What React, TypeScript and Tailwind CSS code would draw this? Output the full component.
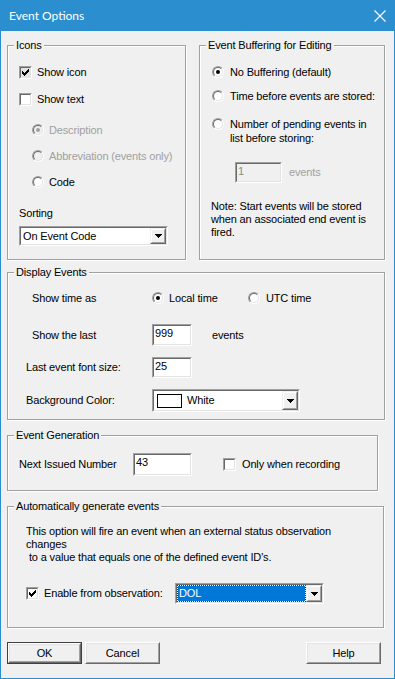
import type { ReactNode } from "react";

const CHECK_PATH =
  "M7 1h1v1h-1z M6 2h2v1h-2z M1 3h1v1h-1z M5 3h3v1h-3z M1 4h2v1h-2z M4 4h3v1h-3z M1 5h5v1h-5z M2 6h3v1h-3z M3 7h1v1h-1z";

function Sunken({
  className,
  inner,
  children,
}: {
  className: string;
  inner?: string;
  children?: ReactNode;
}) {
  return (
    <div
      className={`border border-t-[#a0a0a0] border-l-[#a0a0a0] border-b-white border-r-white ${className}`}
    >
      <div
        className={`h-full w-full border border-t-[#696969] border-l-[#696969] border-b-[#e3e3e3] border-r-[#e3e3e3] ${
          inner ?? "bg-white"
        }`}
      >
        {children}
      </div>
    </div>
  );
}

function Checkbox({ checked, pressed }: { checked?: boolean; pressed?: boolean }) {
  return (
    <Sunken
      className="w-[13px] h-[13px] shrink-0"
      inner={pressed ? "bg-[#e3e3e3]" : "bg-white"}
    >
      {checked && (
        <svg width="9" height="9" viewBox="0 0 9 9" shapeRendering="crispEdges">
          <path d={CHECK_PATH} fill="#000" />
        </svg>
      )}
    </Sunken>
  );
}

function Radio({ checked, disabled }: { checked?: boolean; disabled?: boolean }) {
  return (
    <div className="w-[12px] h-[12px] shrink-0 rounded-full border border-t-[#a0a0a0] border-l-[#a0a0a0] border-b-white border-r-white">
      <div
        className={`flex h-full w-full items-center justify-center rounded-full border border-t-[#696969] border-l-[#696969] border-b-[#e3e3e3] border-r-[#e3e3e3] ${
          disabled ? "bg-[#f0f0f0]" : "bg-white"
        }`}
      >
        {checked && (
          <div
            className={`w-[4px] h-[4px] rounded-full ${
              disabled ? "bg-[#a0a0a0]" : "bg-black"
            }`}
          />
        )}
      </div>
    </div>
  );
}

function ArrowButton() {
  return (
    <div className="w-[16px] h-full shrink-0 border border-t-[#f0f0f0] border-l-[#f0f0f0] border-b-[#696969] border-r-[#696969]">
      <div className="flex h-full w-full items-center justify-center bg-[#f0f0f0] border border-t-white border-l-white border-b-[#a0a0a0] border-r-[#a0a0a0]">
        <svg width="7" height="4" viewBox="0 0 7 4" shapeRendering="crispEdges">
          <path d="M0 0h7v1h-7z M1 1h5v1h-5z M2 2h3v1h-3z M3 3h1v1h-1z" fill="#000" />
        </svg>
      </div>
    </div>
  );
}

function Combo({ className, children }: { className: string; children: ReactNode }) {
  return (
    <Sunken className={className}>
      <div className="flex h-full w-full">
        <div className="flex flex-1 items-center">{children}</div>
        <ArrowButton />
      </div>
    </Sunken>
  );
}

function Edit({ className, value, disabled }: { className: string; value: string; disabled?: boolean }) {
  return (
    <Sunken className={className} inner={disabled ? "bg-[#f0f0f0]" : "bg-white"}>
      <div className={`pl-[1px] leading-[15px] ${disabled ? "text-[#8a8a8a]" : "text-black"}`}>
        {value}
      </div>
    </Sunken>
  );
}

function Group({
  title,
  className,
  children,
}: {
  title: string;
  className: string;
  children: ReactNode;
}) {
  return (
    <div
      className={`relative border border-[#a0a0a0] shadow-[inset_1px_1px_0_#ffffff,1px_1px_0_#ffffff] ${className}`}
    >
      <span className="absolute -top-[7px] left-[6px] bg-[#f0f0f0] px-[2px] leading-[13px]">
        {title}
      </span>
      {children}
    </div>
  );
}

function Button({ label, isDefault }: { label: string; isDefault?: boolean }) {
  return (
    <div
      className={`w-[75px] h-[22px] ${
        isDefault ? "border border-[#404040]" : ""
      }`}
    >
      <div className="h-full w-full border border-t-white border-l-white border-b-[#696969] border-r-[#696969]">
        <div className="flex h-full w-full items-center justify-center border border-t-[#e3e3e3] border-l-[#e3e3e3] border-b-[#a0a0a0] border-r-[#a0a0a0] bg-[#f0f0f0]">
          {label}
        </div>
      </div>
    </div>
  );
}

export default function App() {
  return (
    <div className="w-[395px] h-[679px] flex flex-col bg-[#f0f0f0] border-x border-b border-[#2b8ecf] font-['Liberation_Sans',Arial,sans-serif] text-[11px] tracking-[-0.15px] text-black overflow-hidden">
      <div className="h-[31px] -mx-px shrink-0 flex items-center justify-between bg-[#2b8ecf] pl-[9px] pr-[9px] text-white">
        <span className="font-['Lato',sans-serif] text-[12px] tracking-normal">Event Options</span>
        <svg width="12" height="12" viewBox="0 0 12 12">
          <path d="M0.5 0.5 L11.5 11.5 M11.5 0.5 L0.5 11.5" stroke="#fff" strokeWidth="1.1" />
        </svg>
      </div>

      <div className="flex flex-col pl-[6px]">
        <div className="mt-[14px] flex">
          <Group title="Icons" className="w-[179px] h-[215px]">
            <div className="flex flex-col pl-[11px]">
              <div className="mt-[18px] h-[16px] flex items-center gap-[5px]">
                <Checkbox checked pressed />
                <span>Show icon</span>
              </div>
              <div className="mt-[11px] h-[16px] flex items-center gap-[5px]">
                <Checkbox />
                <span>Show text</span>
              </div>
              <div className="mt-[15px] h-[16px] pl-[13px] flex items-center gap-[5px] text-[#a0a0a0]">
                <Radio checked disabled />
                <span>Description</span>
              </div>
              <div className="mt-[10px] h-[16px] pl-[13px] flex items-center gap-[5px] text-[#a0a0a0]">
                <Radio disabled />
                <span>Abbreviation (events only)</span>
              </div>
              <div className="mt-[10px] h-[16px] pl-[13px] flex items-center gap-[5px]">
                <Radio />
                <span>Code</span>
              </div>
              <div className="mt-[15px] h-[16px] flex items-center">Sorting</div>
              <Combo className="mt-[5px] w-[149px] h-[20px]">
                <span className="pl-[2px]">On Event Code</span>
              </Combo>
            </div>
          </Group>

          <Group title="Event Buffering for Editing" className="ml-[13px] w-[186px] h-[215px]">
            <div className="flex flex-col pl-[12px]">
              <div className="mt-[18px] h-[16px] flex items-center gap-[6px]">
                <Radio checked />
                <span>No Buffering (default)</span>
              </div>
              <div className="mt-[8px] h-[16px] flex items-center gap-[6px]">
                <Radio />
                <span>Time before events are stored:</span>
              </div>
              <div className="mt-[13px] flex items-start gap-[6px]">
                <div className="mt-[1px]">
                  <Radio />
                </div>
                <span className="leading-[14px]">
                  Number of pending events in
                  <br />
                  list before storing:
                </span>
              </div>
              <div className="mt-[17px] ml-[23px] flex items-center gap-[7px]">
                <Edit className="w-[47px] h-[21px]" value="1" disabled />
                <span className="text-[#a0a0a0]">events</span>
              </div>
              <p className="mt-[17px] -ml-[1px] leading-[13px]">
                Note: Start events will be stored
                <br />
                when an associated end event is
                <br />
                fired.
              </p>
            </div>
          </Group>
        </div>

        <Group title="Display Events" className="mt-[12px] w-[378px] h-[148px]">
          <div className="flex flex-col">
            <div className="mt-[17px] h-[16px] pl-[24px] flex items-center">
              <span className="w-[120px]">Show time as</span>
              <div className="w-[96px] flex items-center gap-[5px]">
                <Radio checked />
                <span>Local time</span>
              </div>
              <div className="flex items-center gap-[6px]">
                <Radio />
                <span>UTC time</span>
              </div>
            </div>
            <div className="mt-[18px] h-[22px] pl-[24px] flex items-center">
              <span className="w-[120px]">Show the last</span>
              <Edit className="w-[40px] h-[22px]" value="999" />
              <span className="ml-[20px]">events</span>
            </div>
            <div className="mt-[11px] h-[21px] pl-[18px] flex items-center">
              <span className="w-[126px]">Last event font size:</span>
              <Edit className="w-[40px] h-[21px]" value="25" />
            </div>
            <div className="mt-[11px] h-[23px] pl-[18px] flex items-center">
              <span className="w-[126px]">Background Color:</span>
              <Combo className="w-[148px] h-[23px]">
                <div className="ml-[3px] w-[25px] h-[14px] border border-black bg-white" />
                <span className="ml-[5px]">White</span>
              </Combo>
            </div>
          </div>
        </Group>

        <Group title="Event Generation" className="mt-[15px] w-[371px] h-[56px]">
          <div className="mt-[17px] h-[23px] pl-[11px] flex items-center">
            <span className="w-[114px]">Next Issued Number</span>
            <Edit className="w-[59px] h-[23px]" value="43" />
            <div className="ml-[31px] flex items-center gap-[6px]">
              <Checkbox />
              <span>Only when recording</span>
            </div>
          </div>
        </Group>

        <Group title="Automatically generate events" className="mt-[15px] w-[377px] h-[122px]">
          <div className="flex flex-col pl-[18px]">
            <p className="mt-[18px] leading-[13px] whitespace-pre">
              {"This option will fire an event when an external status observation\nchanges\n to a value that equals one of the defined event ID's."}
            </p>
            <div className="mt-[19px] h-[21px] flex items-center">
              <Checkbox checked />
              <span className="ml-[5px] w-[131px]">Enable from observation:</span>
              <Combo className="w-[149px] h-[21px]">
                <div className="m-[1px] flex h-[15px] flex-1 items-center bg-[#0078d7] pl-[1px] text-white outline-1 outline-dotted outline-[#333]">
                  DOL
                </div>
              </Combo>
            </div>
          </div>
        </Group>

        <div className="mt-[14px] flex">
          <Button label="OK" isDefault />
          <div className="ml-[3px]">
            <Button label="Cancel" />
          </div>
          <div className="ml-[146px]">
            <Button label="Help" />
          </div>
        </div>
      </div>
    </div>
  );
}
